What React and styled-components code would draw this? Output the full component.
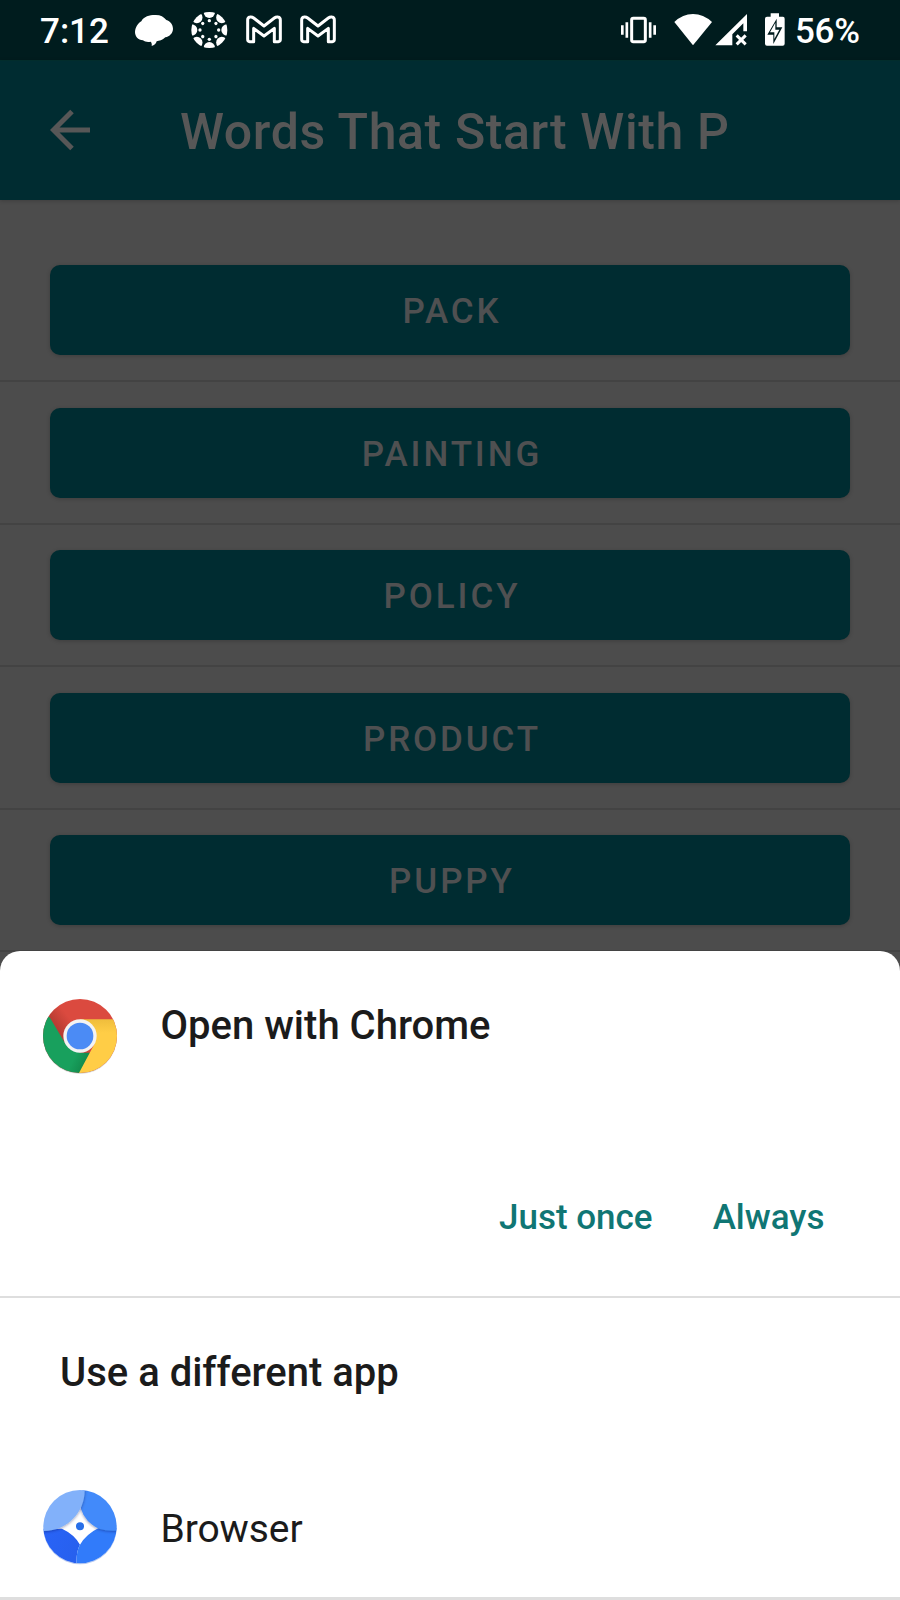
import React from 'react';
import styled, { createGlobalStyle } from 'styled-components';

const GlobalStyle = createGlobalStyle`
  * { box-sizing: border-box; }
  body { margin: 0; background: #4c4c4c; font-family: Roboto, "Liberation Sans", sans-serif; }
  button { font-family: inherit; border: 0; background: none; padding: 0; margin: 0; cursor: pointer; }
  svg { display: block; flex: none; }
`;

const Screen = styled.div`
  position: relative;
  width: 900px;
  height: 1600px;
  overflow: hidden;
  background: #4c4c4c;
`;

const StatusBar = styled.header`
  display: flex;
  justify-content: space-between;
  height: 60px;
  padding: 10px 40px;
  background: #001c1e;
  color: #fff;
`;

const StatusGroup = styled.div`
  display: flex;
  gap: ${(p) => p.$gap}px;
`;

const StatusText = styled.span`
  width: ${(p) => p.$width}px;
  font-size: 35px;
  font-weight: 500;
  line-height: 43px;
  letter-spacing: ${(p) => p.$spacing || 0}px;
  white-space: nowrap;
`;

const Toolbar = styled.div`
  display: flex;
  align-items: center;
  height: 140px;
  padding: 0 0 1px 50px;
  gap: 89px;
  background: #002c31;
  border-top: 1px solid #022d2c;
  box-shadow: 0 1px 4px rgba(0, 0, 0, 0.2);
`;

const Title = styled.h1`
  margin: 3px 0 0;
  font-size: 50px;
  font-weight: 500;
  line-height: 60px;
  letter-spacing: 0.6px;
  color: #575757;
  white-space: nowrap;
`;

const WordList = styled.main`
  padding-top: 40px;
`;

const WordRow = styled.div`
  padding: 25px 50px;
  border-bottom: 2px solid #434343;
  margin-bottom: 0.5px;
`;

const WordButton = styled.button`
  display: block;
  width: 100%;
  height: 90px;
  padding: 3px 0 0 4px;
  border-radius: 10px;
  background: #002c31;
  box-shadow: 0 1px 4px rgba(0, 0, 0, 0.2);
  color: #4f5051;
  font-size: 35px;
  font-weight: 500;
  letter-spacing: 2.9px;
`;

const Sheet = styled.section`
  position: absolute;
  left: 0;
  right: 0;
  bottom: 0;
  height: 649px;
  display: flex;
  flex-direction: column;
  border-radius: 20px 20px 0 0;
  background: #fff;
  color: #1b1b1b;
`;

const DefaultApp = styled.div`
  display: flex;
  gap: 40.5px;
  height: 225px;
  padding: 45px 40px 0;
`;

const AppName = styled.h2`
  margin: ${(p) => p.$top}px 0 0;
  font-size: ${(p) => p.$size}px;
  font-weight: ${(p) => p.$weight};
  line-height: 48px;
  letter-spacing: ${(p) => p.$spacing || 0}px;
  white-space: nowrap;
`;

const Actions = styled.div`
  display: flex;
  justify-content: flex-end;
  gap: 60px;
  height: 120px;
  padding: 22px 75.5px 0 0;
`;

const ActionButton = styled.button`
  height: 40px;
  color: #107674;
  font-size: 35px;
  font-weight: 500;
  line-height: 40px;
  white-space: nowrap;
`;

const Divider = styled.hr`
  width: 100%;
  height: ${(p) => p.$size}px;
  margin: 0;
  border: 0;
  background: #dedede;
`;

const SectionTitle = styled.h3`
  margin: 0;
  padding: 51px 60px 0;
  height: 179px;
  font-size: 40px;
  font-weight: 500;
  line-height: 48px;
`;

const AppRow = styled.div`
  display: flex;
  flex: 1;
  gap: 40.5px;
  padding: 10px 40px 0;
`;

const ChatIcon = () => (
  <svg width="38" height="40" viewBox="405 30 114 120">
    <path fill="#fff" d="M405 96C406 82 414 70 424 64C431 49 449 45 464 45C480 44 491 50 499 60C511 64 519 74 519 86C519 99 509 109 496 112C488 120 477 123 470 124C468 131 463 137 455 138C456 133 455 128 452 125C442 127 435 125 429 121C414 120 405 109 405 96Z" />
  </svg>
);

const spokes = [0, 45, 90, 135, 180, 225, 270, 315];

const CanvasIcon = () => (
  <svg width="37" height="40" viewBox="573 30 111 120">
    <defs>
      <clipPath id="ring"><circle cx="628" cy="90" r="54" /></clipPath>
    </defs>
    {spokes.map((a) => (
      <g key={a} transform={`rotate(${a} 628 90)`} fill="#fff">
        <circle cx="628" cy="37" r="17" clipPath="url(#ring)" />
        <circle cx="628" cy="62" r="5" />
      </g>
    ))}
  </svg>
);

const MailIcon = () => (
  <svg width="36" height="40" viewBox="738 30 108 120">
    <path fill="none" stroke="#fff" strokeWidth="9" strokeLinejoin="round" d="M743 60Q743 52 750 51Q756 50 761 54L792 78L823 54Q828 50 834 51Q841 52 841 60V118Q841 125 835 125H823V85L792 108L761 85V125H749Q743 125 743 118Z" />
  </svg>
);

const VibrateIcon = () => (
  <svg width="37" height="40" viewBox="60 30 111 120">
    <rect x="95" y="55" width="41" height="70" rx="5" fill="none" stroke="#fff" strokeWidth="9" />
    <path stroke="#fff" strokeWidth="8" d="M67 76V104M80.500 67V113M150.500 67V113M164 76V104" />
  </svg>
);

const WifiIcon = () => (
  <svg width="38" height="40" viewBox="224 30 114 120">
    <path fill="#fff" d="M225 66Q250 42 281 42Q312 42 338 66L281 136Z" />
  </svg>
);

const SignalIcon = () => (
  <svg width="33" height="40" viewBox="346 30 99 120">
    <path fill="#fff" d="M347 136L442 42V94H431V70L398 103V136Z" />
    <path stroke="#fff" strokeWidth="9" d="M411 106L438 133M438 106L411 133" />
  </svg>
);

const BatteryIcon = () => (
  <svg width="20" height="40" viewBox="495 30 60 120">
    <path fill="#fff" d="M512 40H537V50H549Q554 50 554 56V131Q554 137 548 137H501Q495 137 495 131V56Q495 50 501 50H512Z" />
    <path fill="#001c1e" d="M530 56V82H547L520 132V104H502Z" />
    <path fill="#fff" d="M526 68L510 97H523V117L538 89H526Z" />
  </svg>
);

const BackIcon = () => (
  <svg width="41" height="42" viewBox="0 0 41 42">
    <path fill="none" stroke="#575757" strokeWidth="5" d="M40 21H4M22 2.5L3.500 21L22 39.500" />
  </svg>
);

const ChromeIcon = () => (
  <svg width="80" height="80" viewBox="0 0 240 240">
    <defs>
      <clipPath id="chromeDisc"><circle cx="120" cy="120" r="111" /></clipPath>
      <linearGradient id="chromeRed" gradientUnits="userSpaceOnUse" x1="52" y1="108" x2="95" y2="75">
        <stop offset="0" stopColor="#b23a31" />
        <stop offset="1" stopColor="#db4a3f" />
      </linearGradient>
      <linearGradient id="chromeGreen" gradientUnits="userSpaceOnUse" x1="100" y1="190" x2="150" y2="215">
        <stop offset="0" stopColor="#18a05d" />
        <stop offset="1" stopColor="#108045" />
      </linearGradient>
      <linearGradient id="chromeYellow" gradientUnits="userSpaceOnUse" x1="0" y1="70" x2="0" y2="110">
        <stop offset="0" stopColor="#efbd3c" />
        <stop offset="1" stopColor="#ffcd46" />
      </linearGradient>
    </defs>
    <circle cx="120" cy="123" r="111" fill="#000" opacity="0.14" />
    <g clipPath="url(#chromeDisc)">
      <rect width="240" height="240" fill="url(#chromeRed)" />
      <path fill="url(#chromeGreen)" d="M0 45L30 65L77 145L120 170H157L115 240H0Z" />
      <path fill="url(#chromeYellow)" d="M120 70H240V240H112L163 145Z" />
    </g>
    <circle cx="120" cy="120" r="50" fill="#f3f3f3" />
    <circle cx="120" cy="120" r="40" fill="#4b8bf5" />
  </svg>
);

const BrowserIcon = () => (
  <svg width="80" height="80" viewBox="0 0 240 240">
    <defs>
      <clipPath id="browserDisc"><circle cx="120" cy="119" r="110" /></clipPath>
      <filter id="petalShadow" x="-20%" y="-20%" width="140%" height="140%">
        <feDropShadow dx="0" dy="2" stdDeviation="4" floodColor="#001a4d" floodOpacity="0.45" />
      </filter>
      <linearGradient id="petalDark" x1="0" y1="0" x2="1" y2="0.4">
        <stop offset="0" stopColor="#2964f8" />
        <stop offset="1" stopColor="#2760ee" />
      </linearGradient>
    </defs>
    <circle cx="120" cy="122" r="110" fill="#1c50c8" opacity="0.3" />
    <g clipPath="url(#browserDisc)">
      <rect width="240" height="240" fill="#fff" />
      <path fill="url(#petalDark)" d="M0 125H66Q103 142 120 173Q107 195 110 240H0Z" />
      <path fill="#317bfa" d="M240 122H177Q137 142 120 173Q107 195 110 240H240Z" />
      <path filter="url(#petalShadow)" fill="#438afa" d="M128 0H240V130Q206 134 177 125Q136 107 123 66Z" />
      <path filter="url(#petalShadow)" fill="#82b1fa" d="M0 0H134V10C134 74 84 132 10 132H0Z" />
      <path fill="#fff" opacity="0.7" d="M120 84Q137 111 163 126Q135 142 120 165Q106 142 79 127Q107 114 120 84Z" />
    </g>
    <circle cx="120" cy="118" r="12" fill="#286fe8" />
  </svg>
);

const words = ['PACK', 'PAINTING', 'POLICY', 'PRODUCT', 'PUPPY'];

export default function App() {
  return (
    <>
      <GlobalStyle />
      <Screen>
        <StatusBar>
          <StatusGroup $gap={18}>
            <StatusText $width={77}>7:12</StatusText>
            <ChatIcon />
            <CanvasIcon />
            <MailIcon />
            <MailIcon />
          </StatusGroup>
          <StatusGroup $gap={17}>
            <VibrateIcon />
            <StatusGroup $gap={3}>
              <WifiIcon />
              <SignalIcon />
            </StatusGroup>
            <StatusGroup $gap={10}>
              <BatteryIcon />
              <StatusText $width={65} $spacing={-0.3}>56%</StatusText>
            </StatusGroup>
          </StatusGroup>
        </StatusBar>
        <Toolbar>
          <BackIcon />
          <Title>Words That Start With P</Title>
        </Toolbar>
        <WordList>
          {words.map((word) => (
            <WordRow key={word}>
              <WordButton>{word}</WordButton>
            </WordRow>
          ))}
        </WordList>
        <Sheet>
          <DefaultApp>
            <ChromeIcon />
            <AppName $top={6} $size={40} $weight={500}>Open with Chrome</AppName>
          </DefaultApp>
          <Actions>
            <ActionButton>Just once</ActionButton>
            <ActionButton>Always</ActionButton>
          </Actions>
          <Divider $size={2} />
          <SectionTitle>Use a different app</SectionTitle>
          <AppRow>
            <BrowserIcon />
            <AppName $top={18} $size={39} $weight={400} $spacing={-0.1}>Browser</AppName>
          </AppRow>
          <Divider $size={3} />
        </Sheet>
      </Screen>
    </>
  );
}
